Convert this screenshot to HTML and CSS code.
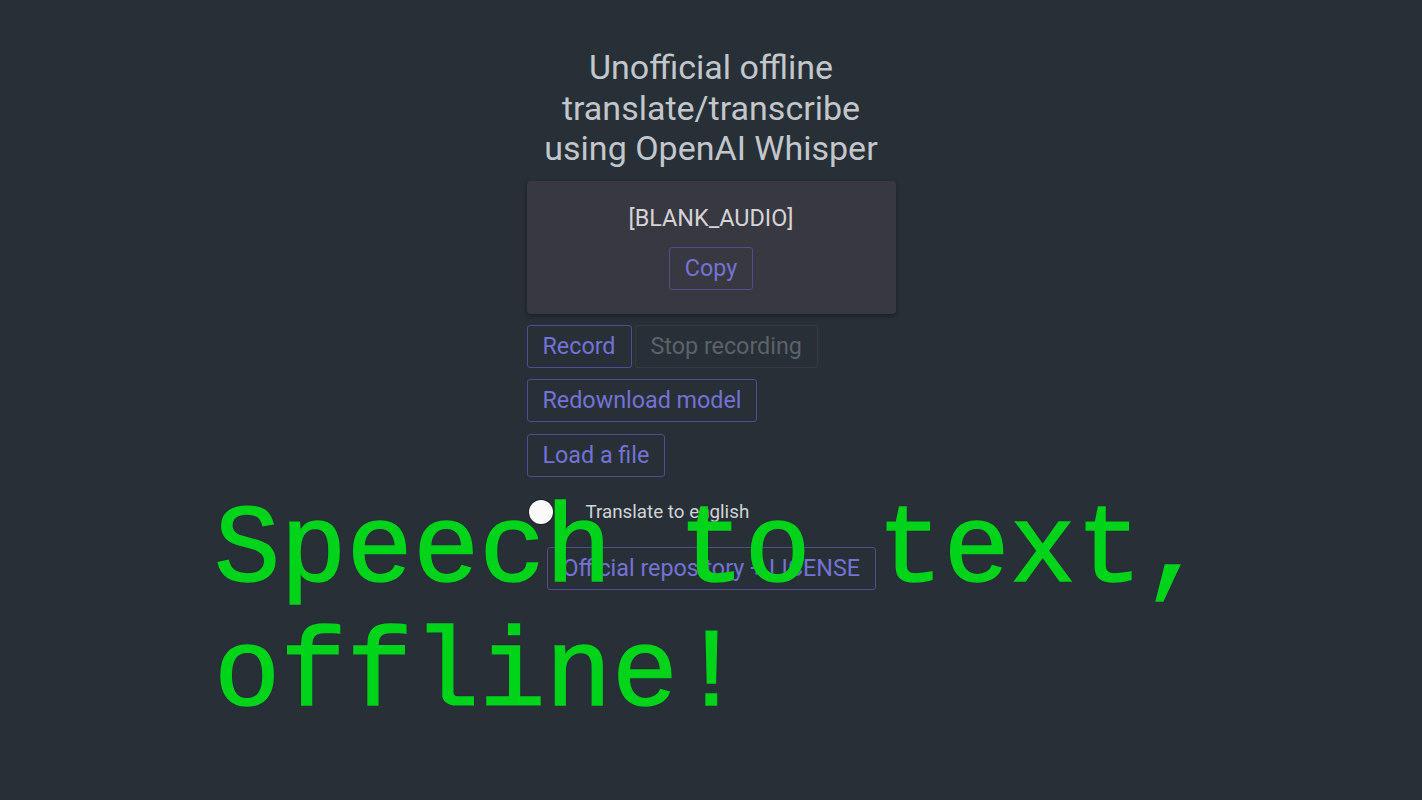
FILE: index.html
```html
<!DOCTYPE html>
<html lang="en">
<head>
    <meta charset="UTF-8">
    <meta name="viewport" content="width=device-width, initial-scale=1.0">
    <title>Whisper offline</title>
    <link rel="stylesheet" href="styles.css">
</head>
<body>
    <div class="app">
        <h1 class="title">Unofficial offline translate/transcribe using OpenAI Whisper</h1>
        <div class="result-card">
            <p class="result-text">[BLANK_AUDIO]</p>
            <button class="btn">Copy</button>
        </div>
        <div class="controls">
            <div class="row">
                <button class="btn">Record</button>
                <button class="btn" disabled>Stop recording</button>
            </div>
            <div class="row">
                <button class="btn">Redownload model</button>
            </div>
            <div class="row">
                <button class="btn">Load a file</button>
            </div>
            <label class="switch-row">
                <span class="switch"><span class="thumb"></span></span>
                <span class="switch-label">Translate to english</span>
            </label>
            <div class="row repo-row">
                <button class="btn">Official repository + LICENSE</button>
            </div>
        </div>
    </div>
    <div class="banner">Speech to text,<br>offline!</div>
</body>
</html>
```

FILE: styles.css
```css
body {
    margin: 0;
    padding: 0;
    background-color: #272f37;
    font-family: Roboto, "Noto Sans", sans-serif;
    height: 100vh;
    overflow: hidden;
}
.app {
    width: 369px;
    margin: 0 auto;
    padding-top: 47px;
}
.title {
    margin: 0 0 12px;
    font-size: 34px;
    font-weight: 400;
    line-height: 40.5px;
    text-align: center;
    color: #c3c7cb;
}
.result-card {
    background-color: #383841;
    border-radius: 4px;
    box-shadow: 0 2px 4px rgba(0, 0, 0, 0.35);
    padding: 23px 0 24px;
    text-align: center;
}
.result-text {
    margin: 0 0 15px;
    font-size: 23.4px;
    line-height: 28px;
    color: #d4d4d8;
}
.btn {
    font-family: Roboto, "Noto Sans", sans-serif;
    font-size: 23.3px;
    line-height: 25px;
    padding: 8px 15px;
    background: transparent;
    color: #7572d6;
    border: 1px solid #4f4e8e;
    border-radius: 3px;
    cursor: pointer;
}
.btn:disabled {
    color: #5b6369;
    border-color: #333c43;
    cursor: default;
}
.controls {
    padding-top: 11px;
}
.row {
    display: flex;
    gap: 3px;
    margin-bottom: 11.5px;
}
.switch-row {
    display: flex;
    align-items: center;
    height: 48px;
    margin-bottom: 10.5px;
}
.switch {
    width: 50px;
    position: relative;
    height: 24px;
}
.thumb {
    position: absolute;
    left: 2px;
    top: 0;
    width: 24px;
    height: 24px;
    border-radius: 50%;
    background-color: #fafafa;
    box-shadow: 0 0 0 1px #1e2228;
}
.switch-label {
    margin-left: 9px;
    font-size: 18.8px;
    color: #d2d4d6;
}
.repo-row {
    padding-left: 20px;
}
.banner {
    position: absolute;
    left: 214px;
    top: 490px;
    font-family: "Liberation Mono", monospace;
    font-size: 110.5px;
    line-height: 124px;
    color: #00d41a;
    -webkit-text-stroke: 1.5px #00d41a;
    text-shadow: 0 0 1.5px #1a1020, 0 0 1px #1a1020;
    pointer-events: none;
}
```
